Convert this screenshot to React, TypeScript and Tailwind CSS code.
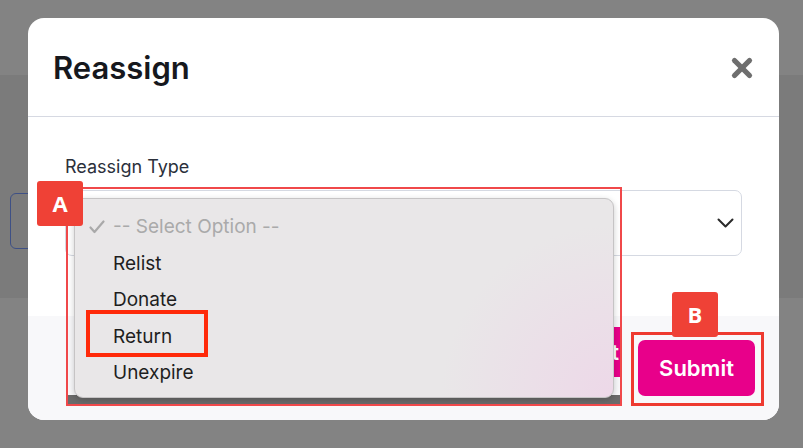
import { X } from "lucide-react";

const options = ["-- Select Option --", "Relist", "Donate", "Return", "Unexpire"];

const Tag = ({ label }: { label: string }) => (
  <div className="w-full h-full flex items-center justify-center bg-[#ef4136] rounded-[3px] text-white text-[22px] font-bold font-['Open_Sans',sans-serif]">
    {label}
  </div>
);

export default function App() {
  return (
    <div className="relative w-[803px] h-[448px] overflow-hidden flex flex-col bg-[#7b7b7b] font-['Inter',sans-serif]">
      {/* page behind the overlay */}
      <div className="h-[75px] bg-[#838383]" />
      <div className="flex-1 pl-[10px] pt-[118px]">
        <div className="w-[120px] h-[56px] rounded-[6px] border border-[#3e5085]" />
      </div>
      <div className="h-[150px] bg-[#838383]" />

      {/* modal */}
      <div className="absolute left-[28px] top-[18px] w-[751px] h-[402px] rounded-[16px] bg-white overflow-hidden flex flex-col">
        <div className="h-[99px] shrink-0 border-b border-[#d6d9e2] flex items-center justify-between pl-[25px] pr-[22px]">
          <h2 className="text-[31px] font-semibold text-[#16181d] tracking-[0px] mt-[2px]">Reassign</h2>
          <X size={30} strokeWidth={4.2} className="text-[#6e6e6e] mt-[2px]" />
        </div>
        <div className="h-[199px] shrink-0 px-[37px] pt-[38px]">
          <div className="text-[18px] leading-[24px] text-[#2b303b] mb-[11px]">Reassign Type</div>
          <div className="h-[66px] rounded-[7px] border border-[#d5d9e2] flex items-center justify-end pr-[7px]">
            <svg width="17" height="10" viewBox="0 0 17 10" fill="none" stroke="#2a2a2a" strokeWidth="2" strokeLinecap="round" strokeLinejoin="round">
              <polyline points="1.5,1.5 8.5,8.5 15.5,1.5" />
            </svg>
          </div>
        </div>
        <div className="flex-1 bg-[#f8f8fa] flex items-center justify-end pr-[24px]">
          <button className="w-[117px] h-[56px] rounded-[7px] bg-[#e8008a] text-white text-[22px] font-semibold">
            Submit
          </button>
        </div>
      </div>

      {/* button hidden under the open menu */}
      <div className="absolute left-[500px] top-[327px] w-[120px] h-[50px] bg-[#e8008a] flex items-center justify-end pr-[1px] text-white text-[22px] font-semibold">
        Submit
      </div>

      {/* native select menu */}
      <div className="absolute left-[68px] top-[395px] w-[552px] h-[9px] bg-[#6a6a6a]" />
      <div className="absolute left-[74px] top-[198px] w-[540px] h-[200px] rounded-[9px] border border-[#c6c4c5] bg-[#e9e7e8] bg-[radial-gradient(circle_at_100%_100%,#edd8e8_0%,#e9e7e8_30%)] shadow-[0_2px_6px_rgba(0,0,0,0.2)] pt-[10px] pb-[8px]">
        {options.map((opt, i) => (
          <div key={opt} className="relative h-[36.5px] flex items-center pl-[38px] text-[19px]">
            {i === 0 && (
              <svg className="absolute left-[14px]" width="16" height="14" viewBox="0 0 16 14" fill="none" stroke="#a9a9a9" strokeWidth="2.2" strokeLinecap="round" strokeLinejoin="round">
                <polyline points="1.5,7.5 5.5,12 14.5,1.5" />
              </svg>
            )}
            <span className={i === 0 ? "text-[#aaaaaa]" : "text-[#1e1e1e]"}>{opt}</span>
          </div>
        ))}
      </div>

      {/* annotations */}
      <div className="absolute left-[66px] top-[187px] w-[556px] h-[219px] border-2 border-[#f0484a]" />
      <div className="absolute left-[37px] top-[181px] w-[46px] h-[45px]">
        <Tag label="A" />
      </div>
      <div className="absolute left-[86px] top-[310px] w-[122px] h-[47px] border-4 border-[#ff2a0a]" />
      <div className="absolute left-[631px] top-[332px] w-[133px] h-[74px] border-[3px] border-[#ee3a30]" />
      <div className="absolute left-[672px] top-[292px] w-[46px] h-[45px]">
        <Tag label="B" />
      </div>
    </div>
  );
}
